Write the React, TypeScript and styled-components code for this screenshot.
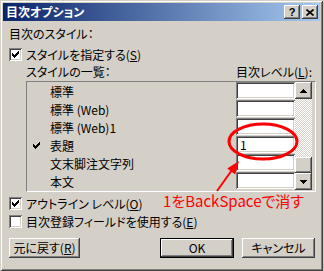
import React from "react";
import styled, { createGlobalStyle, css } from "styled-components";

const GlobalStyle = createGlobalStyle`
  html, body {
    margin: 0;
    padding: 0;
    background: #d4d0c8;
  }
  body {
    font-family: "Noto Sans CJK JP", "DejaVu Sans", sans-serif;
    font-size: 12px;
    color: #000;
  }
`;

const raised = css`
  background: #d4d0c8;
  box-shadow: inset -1px -1px #404040, inset 1px 1px #fff,
    inset -2px -2px #808080, inset 2px 2px #d4d0c8;
`;

const sunken = css`
  background: #fff;
  box-shadow: inset 1px 1px #808080, inset -1px -1px #fff,
    inset 2px 2px #404040, inset -2px -2px #d4d0c8;
`;

const Window = styled.div`
  position: relative;
  box-sizing: border-box;
  width: 323px;
  height: 271px;
  padding: 3px;
  display: flex;
  flex-direction: column;
  background: #d4d0c8;
  box-shadow: inset 1px 1px #d4d0c8, inset -1px -1px #404040,
    inset 2px 2px #fff, inset -2px -2px #808080;
  font-feature-settings: "palt";
`;

const TitleBar = styled.div`
  height: 18px;
  display: flex;
  align-items: center;
  padding: 0 2px 0 3px;
  background: linear-gradient(to right, #0a246a, #a6caf0);
`;

const Title = styled.span`
  flex: 1;
  color: #fff;
  font-weight: bold;
  line-height: 18px;
`;

const CaptionButtons = styled.div`
  display: flex;
  gap: 2px;
`;

const CaptionButton = styled.div`
  ${raised};
  box-sizing: border-box;
  width: 16px;
  height: 14px;
  display: flex;
  align-items: center;
  justify-content: center;
  font: bold 11px/14px "Liberation Sans", sans-serif;
`;

const Body = styled.div`
  flex: 1;
  display: flex;
  flex-direction: column;
  padding: 5px 5px 0 6px;
`;

const Label = styled.div`
  line-height: 16px;
  white-space: nowrap;
`;

const CheckRow = styled.label<{ $gap: number }>`
  display: flex;
  align-items: center;
  gap: 4px;
  height: 13px;
  margin-top: ${({ $gap }) => $gap}px;
  line-height: 16px;
  white-space: nowrap;
`;

const CheckBox = styled.span`
  ${sunken};
  flex: none;
  width: 13px;
  height: 13px;
  display: flex;
  align-items: center;
  justify-content: center;
`;

const Section = styled.div`
  margin-left: 17px;
  margin-right: -1px;
`;

const SectionHeader = styled.div`
  display: grid;
  grid-template-columns: 1fr 80px;
  margin-top: 3px;
  line-height: 16px;
  white-space: nowrap;
`;

const ListBox = styled.div`
  display: flex;
  margin-top: 1px;
  padding-bottom: 1px;
  border: 1px solid;
  border-color: #808080 #fff #fff #808080;
`;

const Rows = styled.div`
  flex: 1;
  display: flex;
  flex-direction: column;
`;

const Row = styled.div`
  display: grid;
  grid-template-columns: 23px 1fr 59px;
  height: 18px;
  align-items: center;
  white-space: nowrap;
`;

const Mark = styled.span`
  display: flex;
  padding-left: 6px;
`;

const LevelBox = styled.div`
  ${sunken};
  align-self: start;
  box-sizing: border-box;
  height: 17px;
  padding: 2px 4px 0;
  line-height: 14px;
`;

const ScrollBar = styled.div`
  width: 17px;
  margin-right: 3px;
  display: flex;
  flex-direction: column;
`;

const ScrollButton = styled.div`
  ${raised};
  height: 17px;
  display: flex;
  align-items: center;
  justify-content: center;
`;

const Track = styled.div`
  flex: 1;
  display: flex;
  flex-direction: column;
  justify-content: flex-end;
  background-color: #fff;
  background-image: repeating-conic-gradient(#d4d0c8 0% 25%, #fff 0% 50%);
  background-size: 2px 2px;
`;

const Thumb = styled.div`
  ${raised};
  height: 16px;
`;

const ButtonRow = styled.div`
  display: flex;
  gap: 8px;
  margin-top: 10px;
`;

const Button = styled.div<{ $width: number; $default?: boolean; $push?: boolean }>`
  ${raised};
  box-sizing: border-box;
  width: ${({ $width }) => $width}px;
  height: 20px;
  display: flex;
  align-items: center;
  justify-content: center;
  line-height: 16px;
  white-space: nowrap;
  ${({ $push }) => $push && "margin-left: auto;"}
  ${({ $default }) => $default && "border: 1px solid #000;"}
`;

const Overlay = styled.svg`
  position: absolute;
  left: 0;
  top: 0;
  pointer-events: none;
`;

const Note = styled.span`
  position: absolute;
  left: 163px;
  top: 192px;
  color: #ff0000;
  font-size: 15px;
  line-height: 18px;
  white-space: nowrap;
`;

const Check = () => (
  <svg width="7" height="7" viewBox="0 0 7 7" shapeRendering="crispEdges">
    <path d="M0 2h1v3H0zM1 3h1v3H1zM2 4h1v3H2zM3 3h1v3H3zM4 2h1v3H4zM5 1h1v3H5zM6 0h1v3H6z" fill="#000" />
  </svg>
);

const Arrow = ({ up }: { up?: boolean }) => (
  <svg width="7" height="4" viewBox="0 0 7 4" shapeRendering="crispEdges">
    <polygon points={up ? "3.5,0 7,4 0,4" : "0,0 7,0 3.5,4"} fill="#000" />
  </svg>
);

const styles = [
  { name: "標準", level: "" },
  { name: "標準 (Web)", level: "" },
  { name: "標準 (Web)1", level: "" },
  { name: "表題", level: "1", checked: true },
  { name: "文末脚注文字列", level: "" },
  { name: "本文", level: "" },
];

export default function App() {
  return (
    <>
      <GlobalStyle />
      <Window>
        <TitleBar>
          <Title>目次オプション</Title>
          <CaptionButtons>
            <CaptionButton>?</CaptionButton>
            <CaptionButton>
              <svg width="8" height="7" viewBox="0 0 8 7">
                <path d="M0.5 0.5L7.5 6.5M7.5 0.5L0.5 6.5" stroke="#000" strokeWidth="1.6" />
              </svg>
            </CaptionButton>
          </CaptionButtons>
        </TitleBar>
        <Body>
          <Label>目次のスタイル：</Label>
          <CheckRow $gap={6}>
            <CheckBox>
              <Check />
            </CheckBox>
            <span>
              スタイルを指定する(<u>S</u>)
            </span>
          </CheckRow>
          <Section>
            <SectionHeader>
              <span>スタイルの一覧：</span>
              <span>
                目次レベル(<u>L</u>):
              </span>
            </SectionHeader>
            <ListBox>
              <Rows>
                {styles.map((s) => (
                  <Row key={s.name}>
                    <Mark>{s.checked && <Check />}</Mark>
                    <span>{s.name}</span>
                    <LevelBox>{s.level}</LevelBox>
                  </Row>
                ))}
              </Rows>
              <ScrollBar>
                <ScrollButton>
                  <Arrow up />
                </ScrollButton>
                <Track>
                  <Thumb />
                </Track>
                <ScrollButton>
                  <Arrow />
                </ScrollButton>
              </ScrollBar>
            </ListBox>
          </Section>
          <CheckRow $gap={5}>
            <CheckBox>
              <Check />
            </CheckBox>
            <span>
              アウトライン レベル(<u>O</u>)
            </span>
          </CheckRow>
          <CheckRow $gap={5}>
            <CheckBox />
            <span>
              目次登録フィールドを使用する(<u>E</u>)
            </span>
          </CheckRow>
          <ButtonRow>
            <Button $width={71}>
              元に戻す(<u>R</u>)
            </Button>
            <Button $width={74} $push $default>
              OK
            </Button>
            <Button $width={73}>キャンセル</Button>
          </ButtonRow>
        </Body>
        <Overlay width="323" height="271" viewBox="0 0 323 271">
          <ellipse cx="263" cy="141.5" rx="34" ry="17.5" fill="none" stroke="#ff0000" strokeWidth="3" />
          <line x1="217" y1="191" x2="232" y2="170" stroke="#ff0000" strokeWidth="2" />
          <polygon points="239,161 235.2,174.4 227.2,168.4" fill="#ff0000" />
        </Overlay>
        <Note>1をBackSpaceで消す</Note>
      </Window>
    </>
  );
}
